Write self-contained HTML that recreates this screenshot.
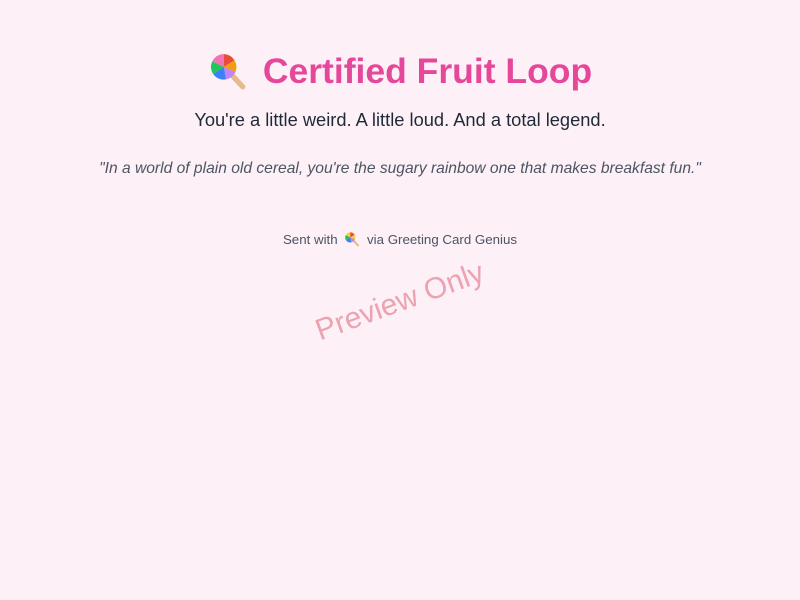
<!DOCTYPE html>
<html><head><meta charset="utf-8"><style>
html,body{margin:0;padding:0;width:800px;height:600px;background:#fdf0f7;overflow:hidden;font-family:"Liberation Sans","DejaVu Sans",sans-serif;}
.t{position:absolute;left:0;width:800px;text-align:center;white-space:nowrap;}
h1{margin:0;font-size:35.5px;font-weight:bold;color:#e5489a;}
</style></head><body>
<div class="t" style="top:51px;"><h1><svg width="40" height="40" viewBox="0 0 38 38" style="vertical-align:-8px;margin-right:15px">
<line x1="20" y1="20" x2="33" y2="34" stroke="#e8b98a" stroke-width="5" stroke-linecap="round"/>
<circle cx="15" cy="15" r="12" fill="#f4d03f"/>
<path d="M15 15 L15 3 A12 12 0 0 1 25 9Z" fill="#e74c3c"/>
<path d="M15 15 L25 9 A12 12 0 0 1 26 20Z" fill="#f39c12"/>
<path d="M15 15 L26 20 A12 12 0 0 1 17 27Z" fill="#c084fc"/>
<path d="M15 15 L17 27 A12 12 0 0 1 5 22Z" fill="#3b82f6"/>
<path d="M15 15 L5 22 A12 12 0 0 1 4 10Z" fill="#22c55e"/>
<path d="M15 15 L4 10 A12 12 0 0 1 15 3Z" fill="#f472b6"/>
</svg>Certified Fruit Loop</h1></div>
<div class="t" style="top:109px;font-size:18.3px;color:#1f2937;">You're a little weird. A little loud. And a total legend.</div>
<div class="t" style="top:160px;font-size:15.6px;font-style:italic;color:#4b5563;">"In a world of plain old cereal, you're the sugary rainbow one that makes breakfast fun."</div>
<div class="t" style="top:231px;font-size:13.3px;color:#4b5563;">Sent with <svg width="16" height="16" viewBox="0 0 38 38" style="vertical-align:-3px;margin:0 3px"><line x1="20" y1="20" x2="33" y2="34" stroke="#e8b98a" stroke-width="5" stroke-linecap="round"/><circle cx="15" cy="15" r="12" fill="#f4d03f"/><path d="M15 15 L15 3 A12 12 0 0 1 25 9Z" fill="#e74c3c"/><path d="M15 15 L26 20 A12 12 0 0 1 17 27Z" fill="#c084fc"/><path d="M15 15 L5 22 A12 12 0 0 1 4 10Z" fill="#22c55e"/><path d="M15 15 L17 27 A12 12 0 0 1 5 22Z" fill="#3b82f6"/></svg> via Greeting Card Genius</div>
<div style="position:absolute;left:300px;top:285px;width:200px;text-align:center;font-size:30px;color:#eca3b1;transform:rotate(-20deg);white-space:nowrap;">Preview Only</div>
</body></html>
